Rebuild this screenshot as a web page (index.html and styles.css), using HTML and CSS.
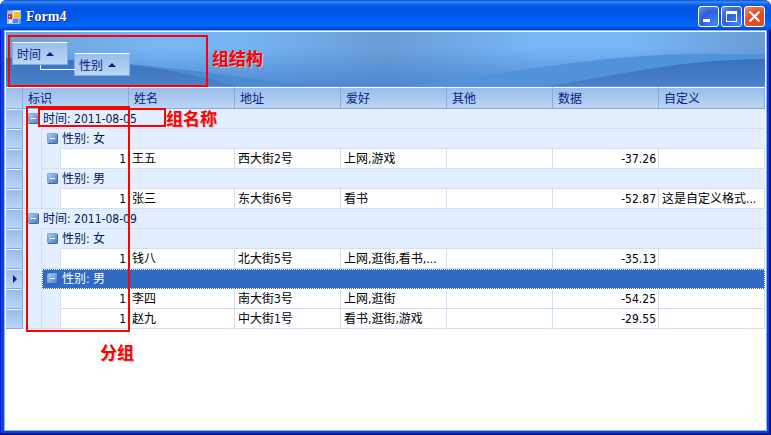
FILE: index.html
```html
<!DOCTYPE html>
<html lang="zh-CN">
<head>
    <meta charset="UTF-8">
    <title>Form4</title>
    <link rel="stylesheet" href="styles.css">
</head>
<body>
    <div class="window">
        <header class="title-bar">
            <svg class="app-icon" viewBox="0 0 14 14" width="14" height="14">
                <rect width="14" height="14" fill="#a9bfe4"/>
                <rect x="6" y="1" width="7" height="7" fill="#fff3a8"/>
                <rect x="7" y="2" width="6" height="6" fill="#f5bf1e"/>
                <rect x="1" y="4" width="4" height="5" fill="#c43a2c"/>
                <rect x="2" y="6" width="1" height="1" fill="#fff"/>
                <rect x="6" y="9" width="5" height="4" fill="#4b84e6"/>
                <rect x="2" y="10" width="3" height="3" fill="#dfe8f8"/>
                <path d="M0 0H6V1H1V3H0zM12 9H14V14H12z" fill="#7c93bb"/>
            </svg>
            <h1>Form4</h1>
            <div class="window-buttons">
                <button type="button" aria-label="最小化">
                    <svg viewBox="0 0 19 19"><path d="M4 12H11V15H4z" fill="#fff"/></svg>
                </button>
                <button type="button" aria-label="最大化">
                    <svg viewBox="0 0 19 19"><path d="M4 4H15V15H4zM5 7V14H14V7z" fill="#fff" fill-rule="evenodd"/></svg>
                </button>
                <button type="button" class="close" aria-label="关闭">
                    <svg viewBox="0 0 19 19"><path d="M4.500 4.500L14.500 14.500M14.500 4.500L4.500 14.500" stroke="#fff" stroke-width="2.200"/></svg>
                </button>
            </div>
        </header>

        <main class="client">
            <div class="group-panel">
                <svg class="waves" viewBox="0 0 759 54" preserveAspectRatio="none">
                    <defs>
                        <linearGradient id="sky">
                            <stop offset="0" stop-color="#6a9fd8"/>
                            <stop offset=".2" stop-color="#77b6f5"/>
                            <stop offset=".31" stop-color="#76b4f2"/>
                            <stop offset=".5" stop-color="#699dd6"/>
                            <stop offset=".7" stop-color="#77b6f5"/>
                            <stop offset=".82" stop-color="#77b6f5"/>
                            <stop offset="1" stop-color="#699dd6"/>
                        </linearGradient>
                        <linearGradient id="shade" x2="0" y2="1">
                            <stop offset=".3" stop-color="#4a84cf" stop-opacity="0"/>
                            <stop offset="1" stop-color="#4a84cf" stop-opacity=".85"/>
                        </linearGradient>
                        <linearGradient id="deep" x2="0" y2="1">
                            <stop offset="0" stop-color="#3a71bd"/>
                            <stop offset="1" stop-color="#4b82ca"/>
                        </linearGradient>
                    </defs>
                    <rect width="759" height="54" fill="url(#sky)"/>
                    <rect width="759" height="54" fill="url(#shade)"/>
                    <path d="M0 26Q70 27 124 32T300 54H0z" fill="#4d8bd2"/>
                    <path d="M0 26Q70 27 124 33T230 54H0z" fill="url(#deep)"/>
                    <path d="M400 54C520 40 590 22 700 22H759V54z" fill="#5193da"/>
                    <path d="M540 54C620 42 670 28 759 27V54z" fill="url(#deep)"/>
                </svg>
                <button type="button" class="group-field">时间 <span class="sort"></span></button>
                <button type="button" class="group-field child">性别 <span class="sort"></span></button>
            </div>

            <table class="grid">
                <colgroup>
                    <col class="col-marker">
                    <col class="col-indent">
                    <col class="col-indent">
                    <col class="col-id">
                    <col><col><col><col><col><col>
                </colgroup>
                <thead>
                    <tr>
                        <th></th>
                        <th colspan="3">标识</th>
                        <th>姓名</th>
                        <th>地址</th>
                        <th>爱好</th>
                        <th>其他</th>
                        <th>数据</th>
                        <th>自定义</th>
                    </tr>
                </thead>
                <tbody>
                    <tr>
                        <td class="marker"></td>
                        <td class="group" colspan="9"><button type="button" class="toggle" aria-label="折叠"></button>时间: 2011-08-05</td>
                    </tr>
                    <tr>
                        <td class="marker"></td>
                        <td class="indent"></td>
                        <td class="group" colspan="8"><button type="button" class="toggle" aria-label="折叠"></button>性别: 女</td>
                    </tr>
                    <tr>
                        <td class="marker"></td>
                        <td class="indent"></td>
                        <td class="indent end"></td>
                        <td class="number">1</td>
                        <td>王五</td>
                        <td>西大街2号</td>
                        <td>上网,游戏</td>
                        <td></td>
                        <td class="number">-37.26</td>
                        <td></td>
                    </tr>
                    <tr>
                        <td class="marker"></td>
                        <td class="indent"></td>
                        <td class="group" colspan="8"><button type="button" class="toggle" aria-label="折叠"></button>性别: 男</td>
                    </tr>
                    <tr>
                        <td class="marker"></td>
                        <td class="indent end"></td>
                        <td class="indent end"></td>
                        <td class="number">1</td>
                        <td>张三</td>
                        <td>东大街6号</td>
                        <td>看书</td>
                        <td></td>
                        <td class="number">-52.87</td>
                        <td>这是自定义格式...</td>
                    </tr>
                    <tr>
                        <td class="marker"></td>
                        <td class="group" colspan="9"><button type="button" class="toggle" aria-label="折叠"></button>时间: 2011-08-09</td>
                    </tr>
                    <tr>
                        <td class="marker"></td>
                        <td class="indent"></td>
                        <td class="group" colspan="8"><button type="button" class="toggle" aria-label="折叠"></button>性别: 女</td>
                    </tr>
                    <tr>
                        <td class="marker"></td>
                        <td class="indent"></td>
                        <td class="indent end"></td>
                        <td class="number">1</td>
                        <td>钱八</td>
                        <td>北大街5号</td>
                        <td>上网,逛街,看书,...</td>
                        <td></td>
                        <td class="number">-35.13</td>
                        <td></td>
                    </tr>
                    <tr>
                        <td class="marker"><span class="current"></span></td>
                        <td class="indent"></td>
                        <td class="group selected" colspan="8"><button type="button" class="toggle" aria-label="折叠"></button>性别: 男</td>
                    </tr>
                    <tr>
                        <td class="marker"></td>
                        <td class="indent"></td>
                        <td class="indent"></td>
                        <td class="number">1</td>
                        <td>李四</td>
                        <td>南大街3号</td>
                        <td>上网,逛街</td>
                        <td></td>
                        <td class="number">-54.25</td>
                        <td></td>
                    </tr>
                    <tr>
                        <td class="marker"></td>
                        <td class="indent end"></td>
                        <td class="indent end"></td>
                        <td class="number">1</td>
                        <td>赵九</td>
                        <td>中大街1号</td>
                        <td>看书,逛街,游戏</td>
                        <td></td>
                        <td class="number">-29.55</td>
                        <td></td>
                    </tr>
                </tbody>
            </table>
        </main>

        <!-- red call-outs over the form -->
        <div class="frame frame-structure"></div>
        <div class="frame frame-name"></div>
        <div class="frame frame-groups"></div>
        <span class="note note-structure">组结构</span>
        <span class="note note-name">组名称</span>
        <span class="note note-groups">分组</span>
    </div>
</body>
</html>
```
FILE: styles.css
```css
* {
    box-sizing: border-box;
}

body {
    margin: 0;
    background: #fff;
    font-family: "DejaVu Sans Condensed", "Noto Sans CJK SC", sans-serif;
    font-size: 12px;
    line-height: 18px;
    color: #000;
}

button {
    font: inherit;
    padding: 0;
    margin: 0;
}

.window {
    position: relative;
    display: flex;
    flex-direction: column;
    min-height: 100vh;
    padding: 0 4px 4px;
    border-radius: 7px 7px 0 0;
    background: #0645e0;
    box-shadow: inset 1px 0 #0019cf, inset -2px -2px #00138c;
}

/* title bar */
.title-bar {
    display: flex;
    align-items: center;
    gap: 5px;
    height: 30px;
    margin: 0 -4px;
    padding: 3px 6px 0 7px;
    border-radius: 7px 7px 0 0;
    background: linear-gradient(#0a4fd0 0, #3c8cf8 2px, #1166ee 4px, #0054e3 8px, #0058ec 18px, #0066ff 24px, #0062f6 27px, #0040c4 30px);
}

.title-bar h1 {
    flex: 1;
    margin: 0;
    font-family: "Liberation Serif", serif;
    font-size: 14px;
    font-weight: bold;
    color: #fff;
    text-shadow: 1px 1px #0a1883;
}

.window-buttons {
    display: flex;
    gap: 2px;
}

.window-buttons button {
    width: 21px;
    height: 21px;
    border: 1px solid #fff;
    border-radius: 3px;
    background: radial-gradient(circle at 80% 85%, #3f86fb, #2c5ddd 55%, #6b8fee 100%);
}

.window-buttons .close {
    background: radial-gradient(circle at 70% 75%, #dc4a16, #dd5530 55%, #f09a80 100%);
}

.window-buttons svg {
    display: block;
}

/* client area */
.client {
    flex: 1;
    padding: 1px;
    border: 1px solid #8fb4ee;
    background: #fff;
}

.group-panel {
    position: relative;
    display: flex;
    align-items: flex-start;
    gap: 6px;
    height: 55px;
    padding: 10px 6px 0;
    border-bottom: 1px solid #5f93d8;
}

.waves {
    position: absolute;
    inset: 0;
    width: 100%;
    height: 100%;
}

.group-field {
    position: relative;
    display: flex;
    align-items: center;
    gap: 5px;
    width: 56px;
    height: 23px;
    padding: 2px 0 0 4px;
    border: 1px solid #84abe3;
    border-top-color: #fff;
    background: linear-gradient(#9abfec, #bad5f4);
    color: #0a2080;
}

.group-field.child {
    margin-top: 11px;
}

/* line joining the nested field to its parent */
.group-field.child::before {
    content: "";
    position: absolute;
    right: 100%;
    top: 11px;
    width: 34px;
    height: 4px;
    border: 1px solid #fff;
    border-width: 0 0 1px 1px;
}

.sort {
    margin-bottom: 2px;
    border: 4px solid transparent;
    border-top-width: 0;
    border-bottom-color: #0a2080;
}

/* grid */
.grid {
    width: 100%;
    table-layout: fixed;
    border-collapse: separate;
    border-spacing: 0;
}

.col-marker {
    width: 17px;
}

.col-indent {
    width: 19px;
}

.col-id {
    width: 68px;
}

.grid th {
    height: 22px;
    padding: 2px 5px 0;
    border: 1px solid #84abe3;
    border-top-color: #fff;
    border-left: 0;
    background: linear-gradient(#98beec, #bad5f4);
    color: #0a2080;
    font-weight: normal;
    text-align: left;
}

.grid td {
    height: 20px;
    padding: 0 2px 0 3px;
    border: 1px solid #d0dff7;
    border-width: 0 1px 1px 0;
    white-space: nowrap;
    overflow: hidden;
}

.grid .number {
    text-align: right;
}

.grid .marker {
    border: 1px solid #84abe3;
    border-top-color: #e3efff;
    border-left: 0;
    background: linear-gradient(#98beec, #bad5f4);
}

.current {
    display: block;
    width: 0;
    margin-left: 4px;
    border: 4px solid transparent;
    border-right-width: 0;
    border-left-color: #0a2080;
}

.grid .indent {
    border-bottom-color: #e3efff;
    background: #e3efff;
}

.grid .indent.end {
    border-bottom-color: #d0dff7;
}

.grid .group {
    padding: 0 5px;
    border: 0;
    background: linear-gradient(#d0dff7, #d0dff7) 18px 100% / 100% 1px no-repeat #e3efff;
    color: #001a58;
}

.grid .group.selected {
    padding: 0 4px;
    border: 1px dotted #fff;
    background: #316ac5;
    color: #fff;
}

.toggle {
    position: relative;
    width: 11px;
    height: 11px;
    margin-right: 4px;
    border: 1px solid #7fa6dc;
    border-right-color: #3c639f;
    border-bottom-color: #3c639f;
    border-radius: 2px;
    background: linear-gradient(135deg, #a5caf6, #4a7fc8);
    vertical-align: 0;
}

.toggle::after {
    content: "";
    position: absolute;
    left: 2px;
    top: 4px;
    width: 5px;
    height: 1px;
    background: #fff;
}

/* call-outs */
.frame {
    position: absolute;
    border: 2px solid #f00;
    pointer-events: none;
}

.frame-structure {
    left: 8px;
    top: 35px;
    width: 200px;
    height: 52px;
}

.frame-name {
    left: 38px;
    top: 108px;
    width: 128px;
    height: 19px;
}

.frame-groups {
    left: 26px;
    top: 106px;
    width: 104px;
    height: 226px;
}

.note {
    position: absolute;
    font-family: "Noto Sans CJK SC", sans-serif;
    font-size: 17px;
    line-height: 20px;
    font-weight: bold;
    color: #f00;
    text-shadow: 1px 1px #c0c0c0;
}

.note-structure {
    left: 212px;
    top: 48px;
}

.note-name {
    left: 166px;
    top: 108px;
}

.note-groups {
    left: 100px;
    top: 342px;
}
```
